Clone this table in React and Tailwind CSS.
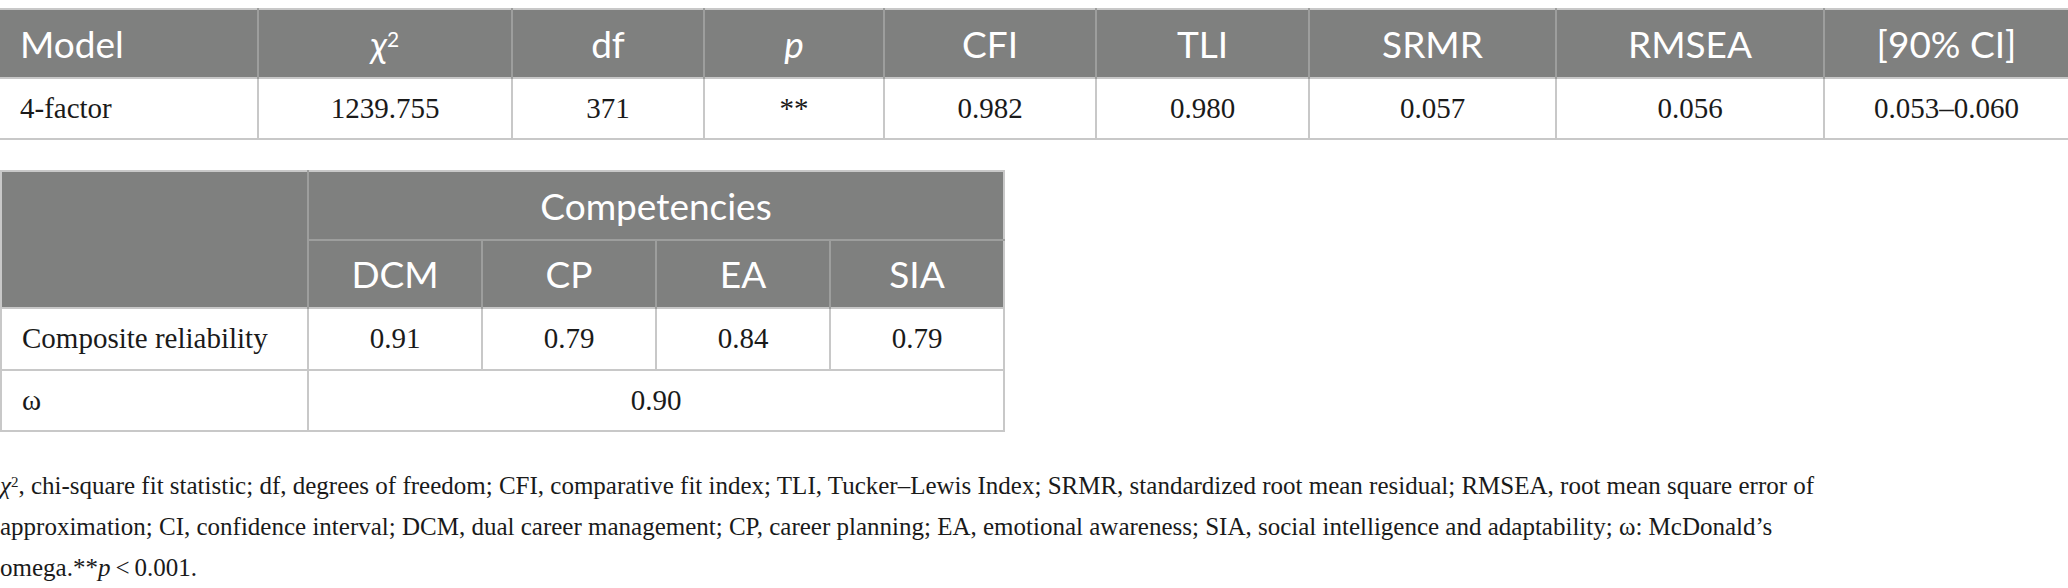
import React from 'react';

const serif = { fontFamily: '"Liberation Serif", "DejaVu Serif", serif' };

const fitHeads = [
    { label: 'Model', w: 'w-[258px]', left: true },
    { label: 'chi', w: 'w-[254px]' },
    { label: 'df', w: 'w-[192px]' },
    { label: 'p', w: 'w-[180px]', italic: true },
    { label: 'CFI', w: 'w-[212px]' },
    { label: 'TLI', w: 'w-[213px]' },
    { label: 'SRMR', w: 'w-[247px]' },
    { label: 'RMSEA', w: 'w-[268px]' },
    { label: '[90% CI]', w: 'w-[244px]' },
];

const fitRow = ['4-factor', '1239.755', '371', '**', '0.982', '0.980', '0.057', '0.056', '0.053–0.060'];

const HeadCell = ({ children, className = '', ...rest }) => (
    <th
        {...rest}
        className={`bg-[#7f807f] text-white font-normal text-[37px] border-x-2 border-[#9d9e9d] ${className}`}
    >
        {children}
    </th>
);

const BodyCell = ({ children, className = '', ...rest }) => (
    <td {...rest} className={`text-[29px] text-[#1a1a1a] border-2 border-[#c8c8c8] ${className}`} style={serif}>
        {children}
    </td>
);

export default function App() {
    return (
        <div className="w-[2068px] h-[588px] bg-white overflow-hidden pt-[8px]" style={{ fontFamily: 'Lato, "Open Sans", sans-serif' }}>
            <table className="table-fixed border-collapse w-[2068px]">
                <thead>
                    <tr className="h-[69px] border-t-2 border-[#c8c8c8]">
                        {fitHeads.map((h, i) => (
                            <HeadCell
                                key={i}
                                className={`${h.w} ${h.left ? 'text-left pl-[20px] border-l-0' : 'text-center'} ${i === fitHeads.length - 1 ? 'border-r-0' : ''} ${h.italic ? 'italic' : ''}`}
                            >
                                {h.label === 'chi' ? (
                                    <span className="italic">χ<sup className="text-[21px] not-italic">2</sup></span>
                                ) : h.label}
                            </HeadCell>
                        ))}
                    </tr>
                </thead>
                <tbody>
                    <tr className="h-[61px]">
                        {fitRow.map((v, i) => (
                            <BodyCell
                                key={i}
                                className={`${i === 0 ? 'text-left pl-[20px] border-l-0' : 'text-center'} ${i === fitRow.length - 1 ? 'border-r-0' : ''}`}
                            >
                                {v}
                            </BodyCell>
                        ))}
                    </tr>
                </tbody>
            </table>

            <table className="table-fixed border-collapse w-[1005px] mt-[30px]">
                <thead>
                    <tr className="h-[69px] border-t-2 border-[#c8c8c8]">
                        <HeadCell rowSpan={2} className="w-[307px] border-l-2 border-l-[#c8c8c8]" />
                        <HeadCell colSpan={4} className="text-center border-b-2 border-b-[#9d9e9d] border-r-[#c8c8c8]">
                            Competencies
                        </HeadCell>
                    </tr>
                    <tr className="h-[68px]">
                        <HeadCell className="w-[202px] text-center">DCM</HeadCell>
                        <HeadCell className="w-[162px] text-center">CP</HeadCell>
                        <HeadCell className="w-[165px] text-center">EA</HeadCell>
                        <HeadCell className="w-[169px] text-center border-r-[#c8c8c8]">SIA</HeadCell>
                    </tr>
                </thead>
                <tbody>
                    <tr className="h-[62px]">
                        <BodyCell className="text-left pl-[20px]">Composite reliability</BodyCell>
                        <BodyCell className="text-center">0.91</BodyCell>
                        <BodyCell className="text-center">0.79</BodyCell>
                        <BodyCell className="text-center">0.84</BodyCell>
                        <BodyCell className="text-center">0.79</BodyCell>
                    </tr>
                    <tr className="h-[61px]">
                        <BodyCell className="text-left pl-[20px]">ω</BodyCell>
                        <BodyCell colSpan={4} className="text-center">0.90</BodyCell>
                    </tr>
                </tbody>
            </table>

            <div className="mt-[33px] text-[25px] leading-[41px] text-[#1a1a1a] whitespace-nowrap" style={serif}>
                <div>
                    <i>χ</i><sup className="text-[15px]">2</sup>, chi-square fit statistic; df, degrees of freedom; CFI, comparative fit index; TLI, Tucker–Lewis Index; SRMR, standardized root mean residual; RMSEA, root mean square error of
                </div>
                <div>
                    approximation; CI, confidence interval; DCM, dual career management; CP, career planning; EA, emotional awareness; SIA, social intelligence and adaptability; ω: McDonald’s
                </div>
                <div>
                    omega.**<i>p</i>{'\u2009'}&lt;{'\u2009'}0.001.
                </div>
            </div>
        </div>
    );
}
